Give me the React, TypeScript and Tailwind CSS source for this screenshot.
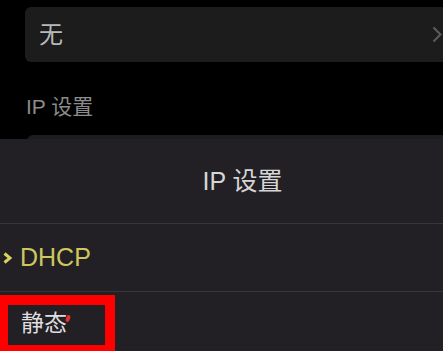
import React from "react";

export default function App() {
  const font = { fontFamily: '"Liberation Sans", "Noto Sans CJK SC", sans-serif' };
  return (
    <div
      className="relative w-[443px] h-[351px] overflow-hidden bg-black"
      style={font}
    >
      {/* background settings page */}
      <div className="flex flex-col pt-[7px] pl-[25px]">
        <div className="flex h-[55px] w-[425px] items-center justify-between rounded-[6px] bg-[#1c1c1c] pl-[14px] pr-[8px]">
          <span className="text-[24px] leading-none text-[#b9b9b9]">无</span>
          <svg width="10" height="17" viewBox="0 0 10 17" className="shrink-0">
            <polyline
              points="1.5,1.5 8.5,8.5 1.5,15.5"
              fill="none"
              stroke="#5c5c5c"
              strokeWidth="2"
            />
          </svg>
        </div>
        <div className="mt-[33px] pl-[1px] text-[21px] leading-[24px] text-[#8c8c8c]">
          IP 设置
        </div>
        <div className="ml-[2px] mt-[16px] h-[40px] w-[430px] rounded-[6px] bg-[#1c1c1c]" />
      </div>

      {/* bottom sheet */}
      <div className="absolute left-0 right-0 top-[139px] bottom-0 flex flex-col bg-[#221f25]">
        <div className="flex h-[84px] items-center justify-center pl-[42px] text-[25px] leading-none text-[#d6d6d6]">
          IP 设置
        </div>
        <div className="h-px bg-[#38353b]" />
        <div className="flex h-[67px] items-center gap-[8px] pl-[3px]">
          <svg width="9" height="12" viewBox="0 0 9 12" className="shrink-0">
            <polyline
              points="1.5,1.5 7,6 1.5,10.5"
              fill="none"
              stroke="#d8d35e"
              strokeWidth="3"
            />
          </svg>
          <span className="text-[25px] leading-none text-[#cdc85e]">DHCP</span>
        </div>
        <div className="h-px bg-[#38353b]" />
        <div className="flex flex-1 items-start pl-[21px] pt-[18px]">
          <span className="relative text-[23px] leading-[26px] text-[#dedede]">
            静态
            <span className="absolute right-[-3px] top-[5px] h-[7px] w-[4px] rotate-[20deg] rounded-full bg-[#e0302a]" />
          </span>
        </div>
      </div>

      {/* red annotation box */}
      <div className="absolute left-0 top-[295px] h-[60px] w-[115px] border-[10px] border-l-[8px] border-[#ff0000]" />
    </div>
  );
}
